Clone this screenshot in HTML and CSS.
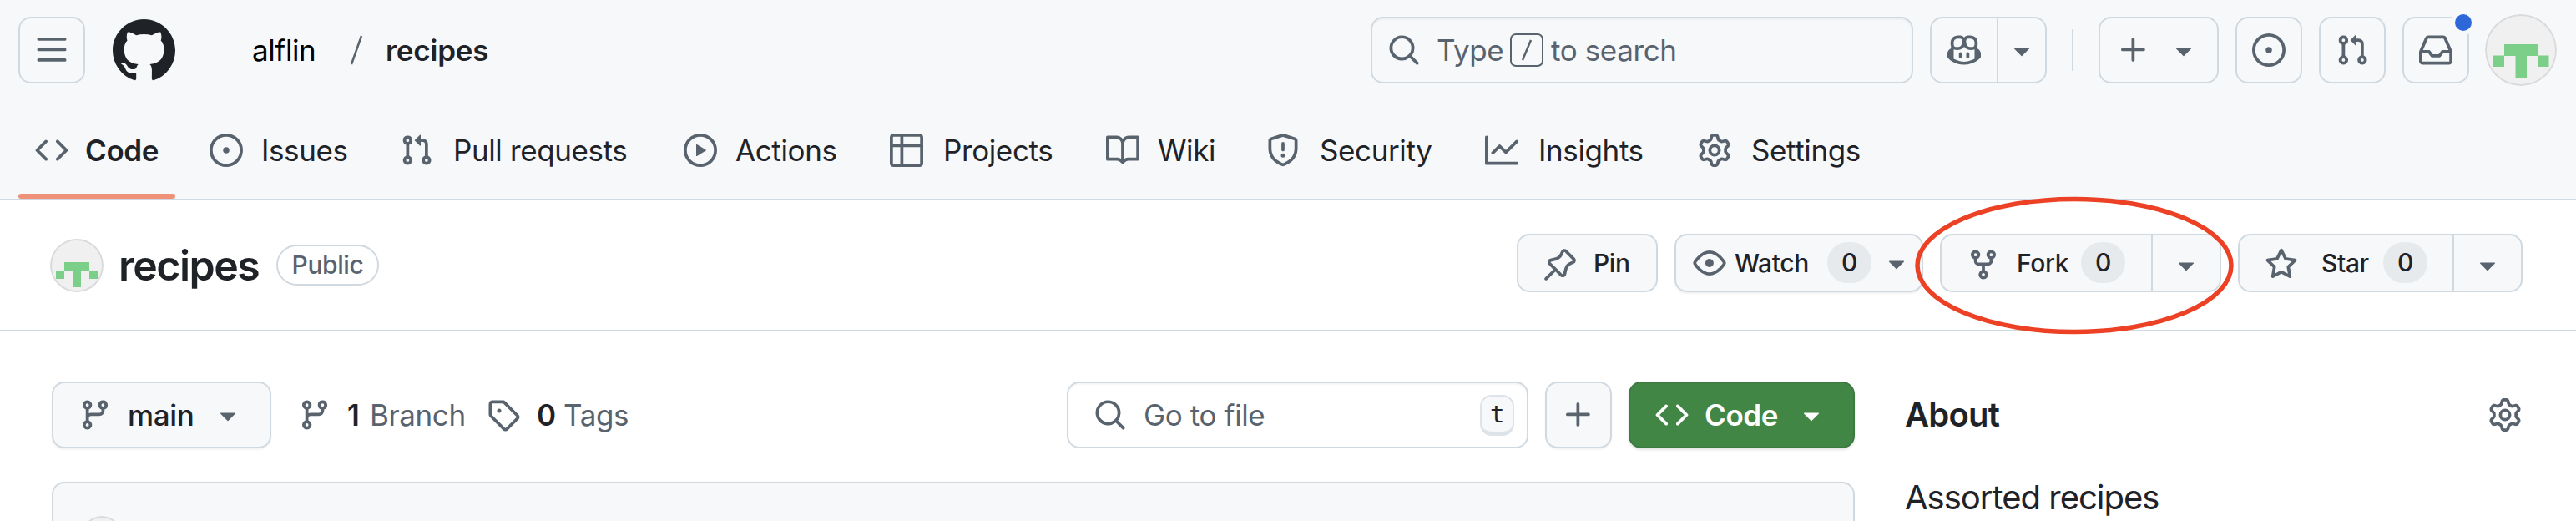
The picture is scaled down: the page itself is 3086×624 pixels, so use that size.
FILE: index.html
```html
<!DOCTYPE html>
<html lang="en">
<head>
<meta charset="utf-8">
<title>alflin/recipes</title>
<link rel="stylesheet" href="styles.css">
</head>
<body>
<svg class="sprite" aria-hidden="true">
  <symbol id="bars" viewBox="0 0 16 16"><path d="M1 2.75A.75.75 0 0 1 1.75 2h12.5a.75.75 0 0 1 0 1.5H1.75A.75.75 0 0 1 1 2.75Zm0 5A.75.75 0 0 1 1.75 7h12.5a.75.75 0 0 1 0 1.5H1.75A.75.75 0 0 1 1 7.75ZM1.75 12h12.5a.75.75 0 0 1 0 1.5H1.75a.75.75 0 0 1 0-1.5Z"/></symbol>
  <symbol id="mark" viewBox="0 0 16 16"><path d="M8 0c4.42 0 8 3.58 8 8a8.013 8.013 0 0 1-5.45 7.59c-.4.08-.55-.17-.55-.38 0-.27.01-1.13.01-2.2 0-.75-.25-1.23-.54-1.48 1.78-.2 3.65-.88 3.65-3.95 0-.88-.31-1.59-.82-2.15.08-.2.36-1.02-.08-2.12 0 0-.67-.22-2.2.82-.64-.18-1.32-.27-2-.27-.68 0-1.36.09-2 .27-1.53-1.03-2.2-.82-2.2-.82-.44 1.1-.16 1.92-.08 2.12-.51.56-.82 1.28-.82 2.15 0 3.06 1.86 3.75 3.64 3.95-.23.2-.44.55-.51 1.07-.46.21-1.61.55-2.33-.66-.15-.24-.6-.83-1.23-.82-.67.01-.27.38.01.53.34.19.73.9.82 1.13.16.45.68 1.31 2.69.94 0 .67.01 1.3.01 1.49 0 .21-.15.45-.55.38A7.995 7.995 0 0 1 0 8c0-4.42 3.58-8 8-8Z"/></symbol>
  <symbol id="search" viewBox="0 0 16 16"><path d="M10.68 11.74a6 6 0 0 1-7.922-8.982 6 6 0 0 1 8.982 7.922l3.04 3.04a.749.749 0 0 1-.326 1.275.749.749 0 0 1-.734-.215ZM11.5 7a4.499 4.499 0 1 0-8.997 0A4.499 4.499 0 0 0 11.5 7Z"/></symbol>
  <symbol id="copilot" viewBox="0 0 16 16"><path d="M7.998 15.035c-4.562 0-7.873-2.914-7.998-3.749V9.338c.085-.628.677-1.686 1.588-2.065.013-.07.024-.143.036-.218.029-.183.06-.384.126-.612-.201-.508-.254-1.084-.254-1.656 0-.87.128-1.769.693-2.484.579-.733 1.494-1.124 2.724-1.261 1.206-.134 2.262.034 2.944.765.05.053.096.108.139.165.044-.057.094-.112.143-.165.682-.731 1.738-.899 2.944-.765 1.23.137 2.145.528 2.724 1.261.566.715.693 1.614.693 2.484 0 .572-.053 1.148-.254 1.656.066.228.098.429.126.612.012.076.024.148.037.218.924.385 1.522 1.471 1.591 2.095v1.872c0 .766-3.351 3.795-8.002 3.795Zm0-1.485c2.28 0 4.584-1.11 5.002-1.433V7.862l-.023-.116c-.49.21-1.075.291-1.727.291-1.146 0-2.059-.327-2.71-.991A3.222 3.222 0 0 1 8 6.303a3.24 3.24 0 0 1-.544.743c-.65.664-1.563.991-2.71.991-.652 0-1.236-.081-1.727-.291l-.023.116v4.255c.419.323 2.722 1.433 5.002 1.433ZM6.762 2.83c-.193-.206-.637-.413-1.682-.297-1.019.113-1.479.404-1.713.7-.247.312-.369.789-.369 1.554 0 .793.129 1.171.308 1.371.162.181.519.379 1.442.379.853 0 1.339-.235 1.638-.54.315-.322.527-.827.617-1.553.117-.935-.037-1.395-.241-1.614Zm4.155-.297c-1.044-.116-1.488.091-1.681.297-.204.219-.359.679-.242 1.614.091.726.303 1.231.618 1.553.299.305.784.54 1.638.54.922 0 1.28-.198 1.442-.379.179-.2.308-.578.308-1.371 0-.765-.123-1.242-.37-1.554-.233-.296-.693-.587-1.713-.7Z"/><path d="M6.25 9.037a.75.75 0 0 1 .75.75v1.501a.75.75 0 0 1-1.5 0V9.787a.75.75 0 0 1 .75-.75Zm4.25.75v1.501a.75.75 0 0 1-1.5 0V9.787a.75.75 0 0 1 1.5 0Z"/></symbol>
  <symbol id="caret" viewBox="0 0 16 16"><path d="m4.427 7.427 3.396 3.396a.25.25 0 0 0 .354 0l3.396-3.396A.25.25 0 0 0 11.396 7H4.604a.25.25 0 0 0-.177.427Z"/></symbol>
  <symbol id="plus" viewBox="0 0 16 16"><path d="M7.75 2a.75.75 0 0 1 .75.75V7h4.25a.75.75 0 0 1 0 1.5H8.5v4.25a.75.75 0 0 1-1.5 0V8.5H2.75a.75.75 0 0 1 0-1.5H7V2.75A.75.75 0 0 1 7.75 2Z"/></symbol>
  <symbol id="issue" viewBox="0 0 16 16"><path d="M8 9.5a1.5 1.5 0 1 0 0-3 1.5 1.5 0 0 0 0 3Z"/><path d="M8 0a8 8 0 1 1 0 16A8 8 0 0 1 8 0ZM1.5 8a6.5 6.5 0 1 0 13 0 6.5 6.5 0 0 0-13 0Z"/></symbol>
  <symbol id="pull" viewBox="0 0 16 16"><path d="M1.5 3.25a2.25 2.25 0 1 1 3 2.122v5.256a2.251 2.251 0 1 1-1.5 0V5.372A2.25 2.25 0 0 1 1.5 3.25Zm5.677-.177L9.573.677A.25.25 0 0 1 10 .854V2.5h1A2.5 2.5 0 0 1 13.5 5v5.628a2.251 2.251 0 1 1-1.5 0V5a1 1 0 0 0-1-1h-1v1.646a.25.25 0 0 1-.427.177L7.177 3.427a.25.25 0 0 1 0-.354ZM3.75 2.5a.75.75 0 1 0 0 1.5.75.75 0 0 0 0-1.5Zm0 9.5a.75.75 0 1 0 0 1.5.75.75 0 0 0 0-1.5Zm8.25.75a.75.75 0 1 0 1.5 0 .75.75 0 0 0-1.5 0Z"/></symbol>
  <symbol id="inbox" viewBox="0 0 16 16"><path d="M2.8 2.06A1.75 1.75 0 0 1 4.41 1h7.18c.7 0 1.333.417 1.61 1.06l2.74 6.395c.04.093.06.194.06.295v4.5A1.75 1.75 0 0 1 14.25 15H1.75A1.75 1.75 0 0 1 0 13.25v-4.5c0-.101.02-.202.06-.295Zm1.61.44a.25.25 0 0 0-.23.152L1.887 8H4.75a.75.75 0 0 1 .6.3L6.625 10h2.75l1.275-1.7a.75.75 0 0 1 .6-.3h2.863L11.82 2.652a.25.25 0 0 0-.23-.152Zm10.09 7h-2.875l-1.275 1.7a.75.75 0 0 1-.6.3h-3.5a.75.75 0 0 1-.6-.3L4.375 9.5H1.5v3.75c0 .138.112.25.25.25h12.5a.25.25 0 0 0 .25-.25Z"/></symbol>
  <symbol id="code" viewBox="0 0 16 16"><path d="m11.28 3.22 4.25 4.25a.75.75 0 0 1 0 1.06l-4.25 4.25a.749.749 0 0 1-1.275-.326.749.749 0 0 1 .215-.734L13.94 8l-3.72-3.72a.749.749 0 0 1 .326-1.275.749.749 0 0 1 .734.215Zm-6.56 0a.751.751 0 0 1 1.042.018.751.751 0 0 1 .018 1.042L2.06 8l3.72 3.72a.749.749 0 0 1-.326 1.275.749.749 0 0 1-.734-.215L.47 8.53a.75.75 0 0 1 0-1.06Z"/></symbol>
  <symbol id="play" viewBox="0 0 16 16"><path d="M8 0a8 8 0 1 1 0 16A8 8 0 0 1 8 0ZM1.5 8a6.5 6.5 0 1 0 13 0 6.5 6.5 0 0 0-13 0Zm4.879-2.773 4.264 2.559a.25.25 0 0 1 0 .428l-4.264 2.559A.25.25 0 0 1 6 10.559V5.442a.25.25 0 0 1 .379-.215Z"/></symbol>
  <symbol id="table" viewBox="0 0 16 16"><path d="M0 1.75C0 .784.784 0 1.75 0h12.5C15.216 0 16 .784 16 1.75v12.5A1.75 1.75 0 0 1 14.25 16H1.75A1.75 1.75 0 0 1 0 14.25ZM6.5 6.5v8h7.75a.25.25 0 0 0 .25-.25V6.5Zm8-1.5V1.75a.25.25 0 0 0-.25-.25H6.5V5Zm-13 1.5v7.75c0 .138.112.25.25.25H5v-8ZM5 5V1.5H1.75a.25.25 0 0 0-.25.25V5Z"/></symbol>
  <symbol id="book" viewBox="0 0 16 16"><path d="M0 1.75A.75.75 0 0 1 .75 1h4.253c1.227 0 2.317.59 3 1.501A3.743 3.743 0 0 1 11.006 1h4.245a.75.75 0 0 1 .75.75v10.5a.75.75 0 0 1-.75.75h-4.507a2.25 2.25 0 0 0-1.591.659l-.622.621a.75.75 0 0 1-1.06 0l-.622-.621A2.25 2.25 0 0 0 5.258 13H.75a.75.75 0 0 1-.75-.75Zm7.251 10.324.004-5.073-.002-2.253A2.25 2.25 0 0 0 5.003 2.5H1.5v9h3.757a3.75 3.75 0 0 1 1.994.574ZM8.755 4.75l-.004 7.322a3.752 3.752 0 0 1 1.992-.572H14.5v-9h-3.495a2.25 2.25 0 0 0-2.25 2.25Z"/></symbol>
  <symbol id="shield" viewBox="0 0 16 16"><path d="M7.467.133a1.748 1.748 0 0 1 1.066 0l5.25 1.68A1.75 1.75 0 0 1 15 3.48V7c0 1.566-.32 3.182-1.303 4.682-.983 1.498-2.585 2.813-5.032 3.855a1.697 1.697 0 0 1-1.33 0c-2.447-1.042-4.049-2.357-5.032-3.855C1.32 10.182 1 8.566 1 7V3.48a1.755 1.755 0 0 1 1.217-1.667Zm.61 1.429a.25.25 0 0 0-.153 0l-5.25 1.68a.25.25 0 0 0-.174.238V7c0 1.358.275 2.666 1.057 3.86.784 1.194 2.121 2.34 4.366 3.297a.196.196 0 0 0 .154 0c2.245-.956 3.582-2.104 4.366-3.298C13.225 9.666 13.5 8.36 13.5 7V3.48a.251.251 0 0 0-.174-.237l-5.25-1.68ZM8.75 4.75v3a.75.75 0 0 1-1.5 0v-3a.75.75 0 0 1 1.5 0ZM9 10.5a1 1 0 1 1-2 0 1 1 0 0 1 2 0Z"/></symbol>
  <symbol id="graph" viewBox="0 0 16 16"><path d="M1.5 1.75V13.5h13.75a.75.75 0 0 1 0 1.5H.75a.75.75 0 0 1-.75-.75V1.75a.75.75 0 0 1 1.5 0Zm14.28 2.53-5.25 5.25a.75.75 0 0 1-1.06 0L7 7.06 4.28 9.78a.751.751 0 0 1-1.042-.018.751.751 0 0 1-.018-1.042l3.25-3.25a.75.75 0 0 1 1.06 0L10 7.94l4.72-4.72a.751.751 0 0 1 1.042.018.751.751 0 0 1 .018 1.042Z"/></symbol>
  <symbol id="gear" viewBox="0 0 16 16"><path d="M8 0a8.2 8.2 0 0 1 .701.031C9.444.095 9.99.645 10.16 1.29l.288 1.107c.018.066.079.158.212.224.231.114.454.243.668.386.123.082.233.09.299.071l1.103-.303c.644-.176 1.392.021 1.82.63.27.385.506.792.704 1.218.315.675.111 1.422-.364 1.891l-.814.806c-.049.048-.098.147-.088.294.016.257.016.515 0 .772-.01.147.038.246.088.294l.814.806c.475.469.679 1.216.364 1.891a7.977 7.977 0 0 1-.704 1.217c-.428.61-1.176.807-1.82.63l-1.102-.302c-.067-.019-.177-.011-.3.071a5.909 5.909 0 0 1-.668.386c-.133.066-.194.158-.211.224l-.29 1.106c-.168.646-.715 1.196-1.458 1.26a8.006 8.006 0 0 1-1.402 0c-.743-.064-1.289-.614-1.458-1.26l-.289-1.106c-.018-.066-.079-.158-.212-.224a5.738 5.738 0 0 1-.668-.386c-.123-.082-.233-.09-.299-.071l-1.103.303c-.644.176-1.392-.021-1.82-.63a8.12 8.12 0 0 1-.704-1.218c-.315-.675-.111-1.422.363-1.891l.815-.806c.05-.048.098-.147.088-.294a6.214 6.214 0 0 1 0-.772c.01-.147-.038-.246-.088-.294l-.815-.806C.635 6.045.431 5.298.746 4.623a7.92 7.92 0 0 1 .704-1.217c.428-.61 1.176-.807 1.82-.63l1.102.302c.067.019.177.011.3-.071.214-.143.437-.272.668-.386.133-.066.194-.158.211-.224l.29-1.106C6.009.645 6.556.095 7.299.03 7.53.01 7.764 0 8 0Zm-.571 1.525c-.036.003-.108.036-.137.146l-.289 1.105c-.147.561-.549.967-.998 1.189-.173.086-.34.183-.5.29-.417.278-.97.423-1.529.27l-1.103-.303c-.109-.03-.175.016-.195.045-.22.312-.412.644-.573.99-.014.031-.021.11.059.19l.815.806c.411.406.562.957.53 1.456a4.709 4.709 0 0 0 0 .582c.032.499-.119 1.05-.53 1.456l-.815.806c-.081.08-.073.159-.059.19.162.346.353.677.573.989.02.03.085.076.195.046l1.102-.303c.56-.153 1.113-.008 1.53.27.161.107.328.204.501.29.447.222.85.629.997 1.189l.289 1.105c.029.109.101.143.137.146a6.6 6.6 0 0 0 1.142 0c.036-.003.108-.036.137-.146l.289-1.105c.147-.561.549-.967.998-1.189.173-.086.34-.183.5-.29.417-.278.97-.423 1.529-.27l1.103.303c.109.029.175-.016.195-.045.22-.313.411-.644.573-.99.014-.031.021-.11-.059-.19l-.815-.806c-.411-.406-.562-.957-.53-1.456a4.709 4.709 0 0 0 0-.582c-.032-.499.119-1.05.53-1.456l.815-.806c.081-.08.073-.159.059-.19a6.464 6.464 0 0 0-.573-.989c-.02-.03-.085-.076-.195-.046l-1.102.303c-.56.153-1.113.008-1.53-.27a4.44 4.44 0 0 0-.501-.29c-.447-.222-.85-.629-.997-1.189l-.289-1.105c-.029-.11-.101-.143-.137-.146a6.6 6.6 0 0 0-1.142 0ZM11 8a3 3 0 1 1-6 0 3 3 0 0 1 6 0ZM9.5 8a1.5 1.5 0 1 0-3.001.001A1.5 1.5 0 0 0 9.5 8Z"/></symbol>
  <symbol id="pin" viewBox="0 0 16 16"><path d="m11.294.984 3.722 3.722a1.75 1.75 0 0 1-.504 2.826l-1.327.613a3.089 3.089 0 0 0-1.707 2.084l-.584 2.454c-.317 1.332-1.972 1.8-2.94.832L5.75 11.311 1.78 15.28a.749.749 0 1 1-1.06-1.06l3.969-3.97-2.204-2.204c-.968-.968-.5-2.623.832-2.94l2.454-.584a3.08 3.08 0 0 0 2.084-1.707l.613-1.327a1.75 1.75 0 0 1 2.826-.504ZM6.283 9.723l2.732 2.731a.25.25 0 0 0 .42-.119l.584-2.454a4.586 4.586 0 0 1 2.537-3.098l1.328-.613a.25.25 0 0 0 .072-.404l-3.722-3.722a.25.25 0 0 0-.404.072l-.613 1.328a4.584 4.584 0 0 1-3.098 2.537l-2.454.584a.25.25 0 0 0-.119.42l2.731 2.732Z"/></symbol>
  <symbol id="eye" viewBox="0 0 16 16"><path d="M8 2c1.981 0 3.671.992 4.933 2.078 1.27 1.091 2.187 2.345 2.637 3.023a1.62 1.62 0 0 1 0 1.798c-.45.678-1.367 1.932-2.637 3.023C11.67 13.008 9.981 14 8 14c-1.981 0-3.671-.992-4.933-2.078C1.797 10.83.88 9.576.43 8.898a1.62 1.62 0 0 1 0-1.798c.45-.677 1.367-1.931 2.637-3.022C4.33 2.992 6.019 2 8 2ZM1.679 7.932a.12.12 0 0 0 0 .136c.411.622 1.241 1.75 2.366 2.717C5.176 11.758 6.527 12.5 8 12.5c1.473 0 2.825-.742 3.955-1.715 1.124-.967 1.954-2.096 2.366-2.717a.12.12 0 0 0 0-.136c-.412-.621-1.242-1.75-2.366-2.717C10.824 4.242 9.473 3.5 8 3.5c-1.473 0-2.825.742-3.955 1.715-1.124.967-1.954 2.096-2.366 2.717ZM8 10a2 2 0 1 1-.001-3.999A2 2 0 0 1 8 10Z"/></symbol>
  <symbol id="fork" viewBox="0 0 16 16"><path d="M5 5.372v.878c0 .414.336.75.75.75h4.5a.75.75 0 0 0 .75-.75v-.878a2.25 2.25 0 1 1 1.5 0v.878a2.25 2.25 0 0 1-2.25 2.25h-1.5v2.128a2.251 2.251 0 1 1-1.5 0V8.5h-1.5A2.25 2.25 0 0 1 3.5 6.25v-.878a2.25 2.25 0 1 1 1.5 0ZM5 3.25a.75.75 0 1 0-1.5 0 .75.75 0 0 0 1.5 0Zm6.75.75a.75.75 0 1 0 0-1.5.75.75 0 0 0 0 1.5Zm-3 8.75a.75.75 0 1 0-1.5 0 .75.75 0 0 0 1.5 0Z"/></symbol>
  <symbol id="star" viewBox="0 0 16 16"><path d="M8 .25a.75.75 0 0 1 .673.418l1.882 3.815 4.21.612a.75.75 0 0 1 .416 1.279l-3.046 2.97.719 4.192a.751.751 0 0 1-1.088.791L8 12.347l-3.766 1.98a.75.75 0 0 1-1.088-.79l.72-4.194L.818 6.374a.75.75 0 0 1 .416-1.28l4.21-.611L7.327.668A.75.75 0 0 1 8 .25Zm0 2.445L6.615 5.5a.75.75 0 0 1-.564.41l-3.097.45 2.24 2.184a.75.75 0 0 1 .216.664l-.528 3.084 2.769-1.456a.75.75 0 0 1 .698 0l2.77 1.456-.53-3.084a.75.75 0 0 1 .216-.664l2.24-2.183-3.096-.45a.75.75 0 0 1-.564-.41L8 2.694Z"/></symbol>
  <symbol id="branch" viewBox="0 0 16 16"><path d="M9.5 3.25a2.25 2.25 0 1 1 3 2.122V6A2.5 2.5 0 0 1 10 8.5H6a1 1 0 0 0-1 1v1.128a2.251 2.251 0 1 1-1.5 0V5.372a2.25 2.25 0 1 1 1.5 0v1.836A2.493 2.493 0 0 1 6 7h4a1 1 0 0 0 1-1v-.628A2.25 2.25 0 0 1 9.5 3.25Zm-6 0a.75.75 0 1 0 1.5 0 .75.75 0 0 0-1.5 0Zm8.25-.75a.75.75 0 1 0 0 1.5.75.75 0 0 0 0-1.5ZM4.25 12a.75.75 0 1 0 0 1.5.75.75 0 0 0 0-1.5Z"/></symbol>
  <symbol id="tag" viewBox="0 0 16 16"><path d="M1 7.775V2.75C1 1.784 1.784 1 2.75 1h5.025c.464 0 .91.184 1.238.513l6.25 6.25a1.75 1.75 0 0 1 0 2.474l-5.026 5.026a1.75 1.75 0 0 1-2.474 0l-6.25-6.25A1.752 1.752 0 0 1 1 7.775Zm1.5 0c0 .066.026.13.073.177l6.25 6.25a.25.25 0 0 0 .354 0l5.025-5.025a.25.25 0 0 0 0-.354l-6.25-6.25a.25.25 0 0 0-.177-.073H2.75a.25.25 0 0 0-.25.25ZM6 5a1 1 0 1 1 0 2 1 1 0 0 1 0-2Z"/></symbol>
</svg>

<header class="app-header">
  <div class="topbar">
    <button class="square menu-button"><svg class="icon"><use href="#bars"/></svg></button>
    <svg class="mark"><use href="#mark"/></svg>
    <nav class="crumbs">
      <a class="owner">alflin</a>
      <svg class="crumb-slash" viewBox="0 0 16 36"><path d="M14 1 2 35"/></svg>
      <a class="current-repo">recipes</a>
    </nav>
    <div class="global-search">
      <svg class="icon"><use href="#search"/></svg>
      <span class="type-label">Type</span>
      <kbd class="slash-key"><svg viewBox="0 0 16 30"><path d="M13 3 3 27"/></svg></kbd>
      <span class="to-search">to search</span>
    </div>
    <div class="split copilot-group">
      <button class="copilot-main"><svg class="icon"><use href="#copilot"/></svg></button>
      <button class="copilot-more"><svg class="icon"><use href="#caret"/></svg></button>
    </div>
    <span class="separator"></span>
    <button class="create-button"><svg class="icon"><use href="#plus"/></svg><svg class="icon"><use href="#caret"/></svg></button>
    <button class="square"><svg class="icon"><use href="#issue"/></svg></button>
    <button class="square"><svg class="icon"><use href="#pull"/></svg></button>
    <button class="square inbox-button"><svg class="icon"><use href="#inbox"/></svg><span class="unread-dot"></span></button>
    <span class="avatar user-avatar"><svg viewBox="0 0 86 86"><path d="M23 36h40v14H23zM9.500 49.500h13.500v13.500H9.500zM63 49.500h13.500v13.500H63zM36.500 49h13.500v27.500H36.500z"/></svg></span>
  </div>
  <nav class="repo-nav">
    <a class="tab active"><svg class="icon"><use href="#code"/></svg><span>Code</span></a>
    <a class="tab"><svg class="icon"><use href="#issue"/></svg><span>Issues</span></a>
    <a class="tab wide"><svg class="icon"><use href="#pull"/></svg><span>Pull requests</span></a>
    <a class="tab"><svg class="icon"><use href="#play"/></svg><span>Actions</span></a>
    <a class="tab wide"><svg class="icon"><use href="#table"/></svg><span>Projects</span></a>
    <a class="tab"><svg class="icon"><use href="#book"/></svg><span>Wiki</span></a>
    <a class="tab wide"><svg class="icon"><use href="#shield"/></svg><span>Security</span></a>
    <a class="tab wide"><svg class="icon"><use href="#graph"/></svg><span>Insights</span></a>
    <a class="tab wide"><svg class="icon"><use href="#gear"/></svg><span>Settings</span></a>
  </nav>
</header>

<section class="repo-head">
  <span class="avatar repo-avatar"><svg viewBox="0 0 64 64"><path d="M17 28h30v10H17zM7 38h10v10H7zM47 38h10v10H47zM27 37.500h10v20.500H27z"/></svg></span>
  <h1 class="repo-title">recipes</h1>
  <span class="visibility">Public</span>
  <div class="repo-actions">
    <button class="action pin-button"><svg class="icon low"><use href="#pin"/></svg><span>Pin</span></button>
    <button class="action watch-button"><svg class="icon"><use href="#eye"/></svg><span class="watch-label">Watch</span><span class="counter">0</span><svg class="icon watch-caret"><use href="#caret"/></svg></button>
    <div class="action-split fork-group">
      <button class="fork-main"><svg class="icon low"><use href="#fork"/></svg><span class="fork-label">Fork</span><span class="counter">0</span></button>
      <button class="more"><svg class="icon low"><use href="#caret"/></svg></button>
      <svg class="highlight" viewBox="0 0 384 168"><ellipse cx="192" cy="84" rx="188" ry="79.500"/></svg>
    </div>
    <div class="action-split star-group">
      <button class="star-main"><svg class="icon low"><use href="#star"/></svg><span class="star-label">Star</span><span class="counter">0</span></button>
      <button class="more"><svg class="icon low"><use href="#caret"/></svg></button>
    </div>
  </div>
</section>

<main class="content">
  <div class="files">
    <div class="toolbar">
      <button class="branch-button"><svg class="icon"><use href="#branch"/></svg><span>main</span><svg class="icon"><use href="#caret"/></svg></button>
      <a class="stat branches"><svg class="icon"><use href="#branch"/></svg><b>1</b><span>Branch</span></a>
      <a class="stat tags"><svg class="icon"><use href="#tag"/></svg><b>0</b><span>Tags</span></a>
      <div class="file-search"><svg class="icon"><use href="#search"/></svg><span>Go to file</span><kbd class="t-key">t</kbd></div>
      <button class="add-button"><svg class="icon"><use href="#plus"/></svg></button>
      <button class="code-button"><svg class="icon"><use href="#code"/></svg><span>Code</span><svg class="icon"><use href="#caret"/></svg></button>
    </div>
    <div class="file-table"><span class="avatar commit-avatar"></span></div>
  </div>
  <aside class="about">
    <div class="about-head"><h2>About</h2><svg class="icon"><use href="#gear"/></svg></div>
    <p class="description">Assorted recipes</p>
  </aside>
</main>
</body>
</html>
```
FILE: styles.css
```css
* { box-sizing: border-box; }

body {
  margin: 0;
  width: 3086px;
  height: 624px;
  overflow: hidden;
  background: #fff;
  color: #1f2328;
  font: 400 35px/50px Inter, "Liberation Sans", sans-serif;
  letter-spacing: -0.011em;
  white-space: nowrap;
}

button {
  margin: 0;
  padding: 0;
  border: 2px solid #d1d9e0;
  border-radius: 15px;
  background: #f6f8fa;
  color: inherit;
  font: inherit;
  letter-spacing: inherit;
  text-align: left;
  display: flex;
  align-items: center;
  flex: none;
}

.sprite { display: none; }
.icon { width: 40px; height: 40px; flex: none; display: block; fill: #59636e; }

.avatar {
  display: block;
  flex: none;
  border-radius: 50%;
  background: #f0f0f0;
  position: relative;
  overflow: hidden;
}
.avatar::after {
  content: "";
  position: absolute;
  inset: 0;
  border: 2.5px solid #d8dadc;
  border-radius: 50%;
}
.avatar svg { display: block; width: 100%; height: 100%; fill: #7ccf88; }

/* Header */
.app-header { height: 240px; background: #f6f8fa; border-bottom: 2px solid #d1d9e0; }
.topbar { height: 120px; padding-left: 22px; display: flex; align-items: center; }
.square { width: 80px; height: 80px; justify-content: center; margin-left: 20px; }
.menu-button { margin-left: 0; }
.mark { width: 75px; height: 75px; margin-left: 33px; fill: #1f2328; flex: none; }
.crumbs { width: 1432px; padding-left: 92px; display: flex; align-items: center; flex: none; }
.owner { width: 117px; color: #000; }
.crumb-slash { width: 16px; height: 36px; fill: none; stroke: #59636e; stroke-width: 2.5; }
.current-repo { margin-left: 27px; font-weight: 600; letter-spacing: -0.008em; }

.global-search {
  width: 650px;
  height: 80px;
  border: 2px solid #d1d9e0;
  border-radius: 15px;
  box-shadow: inset 0 2px 2px rgba(31, 35, 40, .04);
  padding-left: 18px;
  display: flex;
  align-items: center;
  flex: none;
  color: #59636e;
}
.type-label { width: 86px; margin-left: 19px; }
.slash-key {
  width: 40px;
  height: 40px;
  border: 2.5px solid #59636e;
  border-radius: 7px;
  margin-left: 2px;
  display: flex;
  align-items: center;
  justify-content: center;
}
.slash-key svg { width: 16px; height: 30px; fill: none; stroke: #59636e; stroke-width: 2.5; }
.to-search { margin-left: 9px; }

.split { display: flex; flex: none; margin-left: 20px; }
.copilot-group { width: 140px; height: 80px; }
.copilot-main { width: 82px; border-radius: 15px 0 0 15px; padding-left: 19px; }
.copilot-more { width: 58px; border-left: 0; border-radius: 0 15px 15px 0; padding-left: 8px; }
.separator { width: 2px; height: 50px; margin-left: 30px; background: #d1d9e0; flex: none; }
.create-button { width: 144px; height: 80px; margin-left: 30px; padding-left: 20px; gap: 20px; }
.inbox-button { position: relative; }
.unread-dot {
  position: absolute;
  top: -10px;
  right: -10px;
  width: 30px;
  height: 30px;
  border: 5px solid #f6f8fa;
  border-radius: 50%;
  background: #2e67d8;
}
.user-avatar { width: 86px; height: 86px; margin-left: 19px; }

.repo-nav {
  height: 120px;
  padding-left: 42px;
  display: grid;
  grid-template-columns: 209px 228px 340px 247px 259px 192px 262px 255px 240px;
}
.tab { display: flex; align-items: center; gap: 22px; position: relative; }
.wide { gap: 24px; }
.active { font-weight: 600; gap: 20px; }
.active::after {
  content: "";
  position: absolute;
  left: -20px;
  bottom: 2px;
  width: 188px;
  height: 6px;
  border-radius: 3px;
  background: #f0917a;
}

/* Repository title row */
.repo-head {
  height: 157px;
  padding: 0 64px 0 60px;
  border-bottom: 2px solid #d1d9e0;
  display: flex;
  align-items: center;
}
.repo-avatar { width: 64px; height: 64px; }
.repo-title { margin: 0 0 0 18px; width: 171px; font-size: 50px; line-height: 60px; font-weight: 600; letter-spacing: -0.03em; }
.visibility {
  width: 123px;
  height: 49px;
  margin-left: 18px;
  border: 2px solid #d1d9e0;
  border-radius: 25px;
  color: #59636e;
  font-size: 30px;
  font-weight: 500;
  line-height: 44px;
  text-align: center;
}
.repo-actions {
  height: 70px;
  margin: 0 0 6px auto;
  display: flex;
  align-items: center;
  gap: 20px;
  font-size: 30px;
  font-weight: 500;
}
.action { height: 70px; }
.low { margin-top: 4px; }
.pin-button { width: 169px; padding-left: 30px; gap: 20px; }
.watch-button { width: 298px; padding-left: 20px; box-shadow: 0 2px 2px rgba(31, 35, 40, .06); }
.watch-label { width: 100px; margin-left: 10px; }
.counter {
  width: 53px;
  height: 49px;
  border-radius: 25px;
  background: #e6eaed;
  line-height: 49px;
  text-align: center;
  flex: none;
}
.watch-label + .counter { margin-left: 11px; }
.watch-caret { margin-left: 10px; }
.action-split { display: flex; height: 70px; position: relative; }
.fork-main, .star-main { border-right: 0; border-radius: 15px 0 0 15px; }
.fork-main { width: 253px; padding-left: 30px; }
.star-main { width: 257px; padding-left: 30px; }
.fork-label { width: 77px; margin-left: 20px; }
.star-label { width: 74px; margin-left: 28px; }
.more { width: 84px; border-radius: 0 15px 15px 0; padding-left: 20px; }
.highlight {
  position: absolute;
  left: -31px;
  top: -46px;
  width: 384px;
  height: 168px;
  fill: none;
  stroke: #ec4125;
  stroke-width: 5.5;
  z-index: 1;
}

/* Files and sidebar */
.content { height: 227px; padding: 60px 64px 0 62px; display: grid; grid-template-columns: 2160px 739px; column-gap: 60px; overflow: hidden; }
.toolbar { height: 80px; display: flex; align-items: center; }
.branch-button { width: 263px; height: 80px; padding-left: 30px; font-weight: 500; box-shadow: 0 2px 2px rgba(31, 35, 40, .05); }
.branch-button span { width: 100px; margin-left: 19px; }
.stat { display: flex; align-items: center; color: #59636e; }
.stat b { font-weight: 600; color: #1f2328; }
.branches { width: 226px; margin-left: 32px; }
.branches b { margin-left: 19px; width: 27px; }
.tags b { margin-left: 20px; width: 32px; }
.file-search {
  width: 553px;
  height: 80px;
  margin-left: auto;
  padding: 0 15px 0 30px;
  border: 2px solid #d1d9e0;
  border-radius: 15px;
  box-shadow: inset 0 2px 2px rgba(31, 35, 40, .04);
  display: flex;
  align-items: center;
  color: #59636e;
}
.file-search span { margin-left: 20px; }
.t-key {
  width: 41px;
  height: 49px;
  margin-left: auto;
  border: 2px solid #dde3e8;
  border-bottom-width: 5px;
  border-radius: 14px;
  background: #f6f8fa;
  color: #1f2328;
  font: 400 29px/42px "DejaVu Sans Mono", "Liberation Mono", monospace;
  text-align: center;
}
.add-button { width: 80px; height: 80px; margin-left: 20px; padding-left: 18px; box-shadow: 0 2px 2px rgba(31, 35, 40, .05); }
.code-button {
  width: 271px;
  height: 80px;
  margin-left: 20px;
  padding-left: 30px;
  border-color: #3d7a42;
  background: #428646;
  color: #fff;
  font-weight: 600;
  box-shadow: 0 2px 3px rgba(31, 35, 40, .12);
}
.code-button .icon { fill: #fff; }
.code-button span { width: 108px; margin-left: 19px; }
.file-table { height: 47px; margin-top: 40px; padding: 39px 0 0 33px; border: 2px solid #d1d9e0; border-bottom: 0; border-radius: 15px 15px 0 0; background: #f6f8fa; overflow: hidden; }
.commit-avatar { width: 50px; height: 50px; }
.about { font-size: 40px; line-height: 60px; letter-spacing: -0.025em; }
.about-head { height: 80px; display: flex; align-items: center; justify-content: space-between; }
.about h2 { margin: 0; font-size: 40px; font-weight: 600; letter-spacing: -0.02em; }
.description { margin: 30px 0 0; line-height: 57px; }
```
